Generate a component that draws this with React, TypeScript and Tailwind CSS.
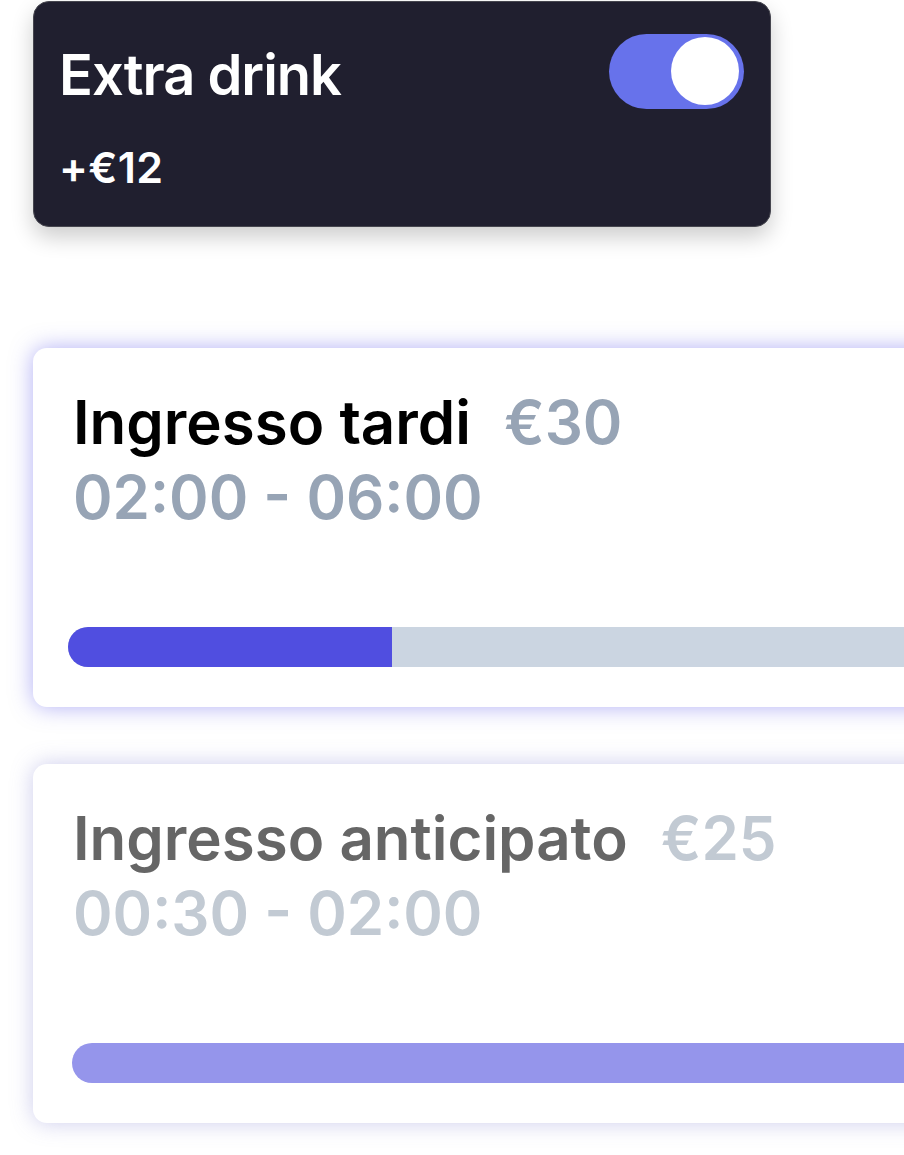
import { useState } from "react";

const slots = [
  {
    id: "tardi",
    name: "Ingresso tardi",
    price: "€30",
    time: "02:00 - 06:00",
    progress: 324,
    active: true,
  },
  {
    id: "anticipato",
    name: "Ingresso anticipato",
    price: "€25",
    time: "00:30 - 02:00",
    progress: 0,
    active: false,
  },
];

function Toggle({ on, onChange }: { on: boolean; onChange: () => void }) {
  return (
    <button
      onClick={onChange}
      className={`relative w-[135px] h-[75px] rounded-full shrink-0 ${
        on ? "bg-[#6772eb]" : "bg-[#4a4a5a]"
      }`}
    >
      <span
        className={`absolute top-[3px] w-[68px] h-[68px] rounded-full bg-white ${
          on ? "right-[5px]" : "left-[5px]"
        }`}
      />
    </button>
  );
}

export default function App() {
  const [extra, setExtra] = useState(true);

  return (
    <main
      className="min-h-screen w-full overflow-hidden bg-white pt-px"
      style={{ fontFamily: "Inter, 'Noto Sans', sans-serif" }}
    >
      {/* Extra drink */}
      <div className="ml-[33px] w-[738px] h-[226px] rounded-[16px] bg-[#201f2f] border border-[#46464f] shadow-[0_10px_22px_rgba(0,0,0,0.2)] pl-[25px] pr-[26px] pt-[32px] text-white">
        <div className="flex items-start justify-between">
          <h2 className="text-[56px] leading-[70px] font-semibold mt-[6px] tracking-[-1px]">Extra drink</h2>
          <Toggle on={extra} onChange={() => setExtra(!extra)} />
        </div>
        <p className="text-[43px] leading-[48px] font-semibold mt-[33px] tracking-[0.3px]">+€12</p>
      </div>

      {/* Slots */}
      <div className="flex flex-col gap-[57px] mt-[121px] ml-[33px]">
        {slots.map((s) => (
          <div
            key={s.id}
            className={`w-[1000px] h-[359px] rounded-[14px] bg-white pl-[40px] pt-[37px] flex flex-col ${
              s.active
                ? "shadow-[0_0_22px_rgba(99,96,235,0.5)]"
                : "shadow-[0_0_22px_rgba(110,110,200,0.35)]"
            }`}
          >
            <div className="flex items-baseline">
              <h3
                className={`text-[60px] leading-[75px] font-semibold tracking-[0px] ${
                  s.active ? "text-black" : "text-[#666666]"
                }`}
              >
                {s.name}
              </h3>
              <span
                className={`ml-[33px] text-[60px] leading-[75px] font-semibold ${
                  s.active ? "text-[#97a4b5]" : "text-[#c2cad3]"
                }`}
              >
                {s.price}
              </span>
            </div>
            <p
              className={`text-[60px] leading-[75px] font-semibold ${
                s.active ? "text-[#97a4b5]" : "text-[#c2cad3]"
              }`}
            >
              {s.time}
            </p>
            <div
              className={`mt-auto mb-[40px] h-[40px] rounded-l-full overflow-hidden flex ${
                s.active ? "-ml-[5px] bg-[#cbd5e1]" : "-ml-[1px] bg-[#9595eb]"
              }`}
            >
              {s.progress > 0 && (
                <div className="h-full bg-[#504ee0]" style={{ width: s.progress }} />
              )}
            </div>
          </div>
        ))}
      </div>
    </main>
  );
}
